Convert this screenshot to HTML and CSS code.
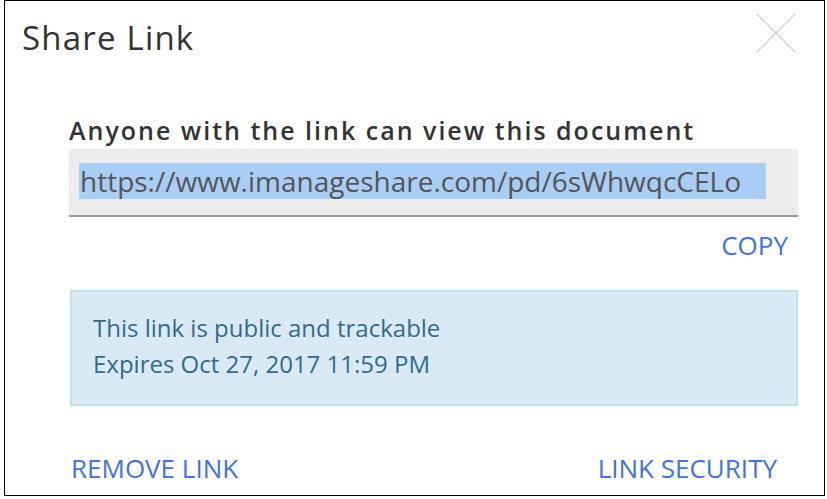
FILE: index.html
```html
<!DOCTYPE html>
<html>
<head>
<meta charset="utf-8">
<link rel="stylesheet" href="styles.css">
</head>
<body>
<div class="dialog">
  <div class="header">
    <h1 class="title">Share Link</h1>
    <svg class="close" width="40" height="40" viewBox="0 0 40 40"><path d="M1 1 L39 39 M39 1 L1 39" stroke="#cfcfcf" stroke-width="1.4" fill="none"/></svg>
  </div>
  <div class="content">
    <div class="label">Anyone with the link can view this document</div>
    <div class="field"><span class="sel">https://www.imanageshare.com/pd/6sWhwqcCELo</span></div>
    <div class="copy-row"><a class="link">COPY</a></div>
    <div class="info">
      <div>This link is public and trackable</div>
      <div>Expires Oct 27, 2017 11:59 PM</div>
    </div>
  </div>
  <div class="footer">
    <a class="link">REMOVE LINK</a>
    <a class="link">LINK SECURITY</a>
  </div>
</div>
</body>
</html>
```
FILE: styles.css
```css
html, body { margin: 0; padding: 0; background: #fff; }
body { font-family: "Open Sans", "Liberation Sans", sans-serif; }
.dialog {
  margin-left: 4px;
  width: 821px;
  height: 496px;
  box-sizing: border-box;
  border: 1px solid #000;
  display: flex;
  flex-direction: column;
}
.header {
  display: flex;
  justify-content: space-between;
  align-items: flex-start;
  padding: 12px 28px 0 17px;
}
.title {
  margin: 5px 0 0 0;
  font-weight: 400;
  font-size: 33px;
  line-height: 40px;
  letter-spacing: 1.2px;
  color: #333;
}
.content {
  padding: 0 26px 0 64px;
  margin-top: 55px;
}
.label {
  font-weight: 600;
  font-size: 25px;
  line-height: 34px;
  letter-spacing: 2px;
  color: #333;
}
.field {
  margin-top: 2px;
  height: 52px;
  background: #ececec;
  border-bottom: 2px solid #999;
  padding: 14px 0 0 10px;
}
.sel {
  display: inline-block;
  width: 687px;
  height: 36px;
  line-height: 36px;
  background: #a9cef6;
  font-size: 28px;
  color: #555;
  white-space: nowrap;
  padding-left: 1px;
  box-sizing: border-box;
}
.copy-row {
  display: flex;
  justify-content: flex-end;
  padding-right: 10px;
  margin-top: 13px;
  height: 30px;
}
.link {
  color: #3f72e6;
  font-size: 26px;
  line-height: 30px;
  cursor: pointer;
}
.info {
  margin-top: 30px;
  margin-left: 1px;
  height: 116px;
  box-sizing: border-box;
  background: #d9eaf5;
  border: 2px solid #bee3ee;
  padding: 18px 21px;
  color: #2f6c8d;
  font-size: 24px;
  line-height: 36px;
}
.footer {
  margin-top: auto;
  display: flex;
  justify-content: space-between;
  padding: 0 47px 12px 66px;
}
```
